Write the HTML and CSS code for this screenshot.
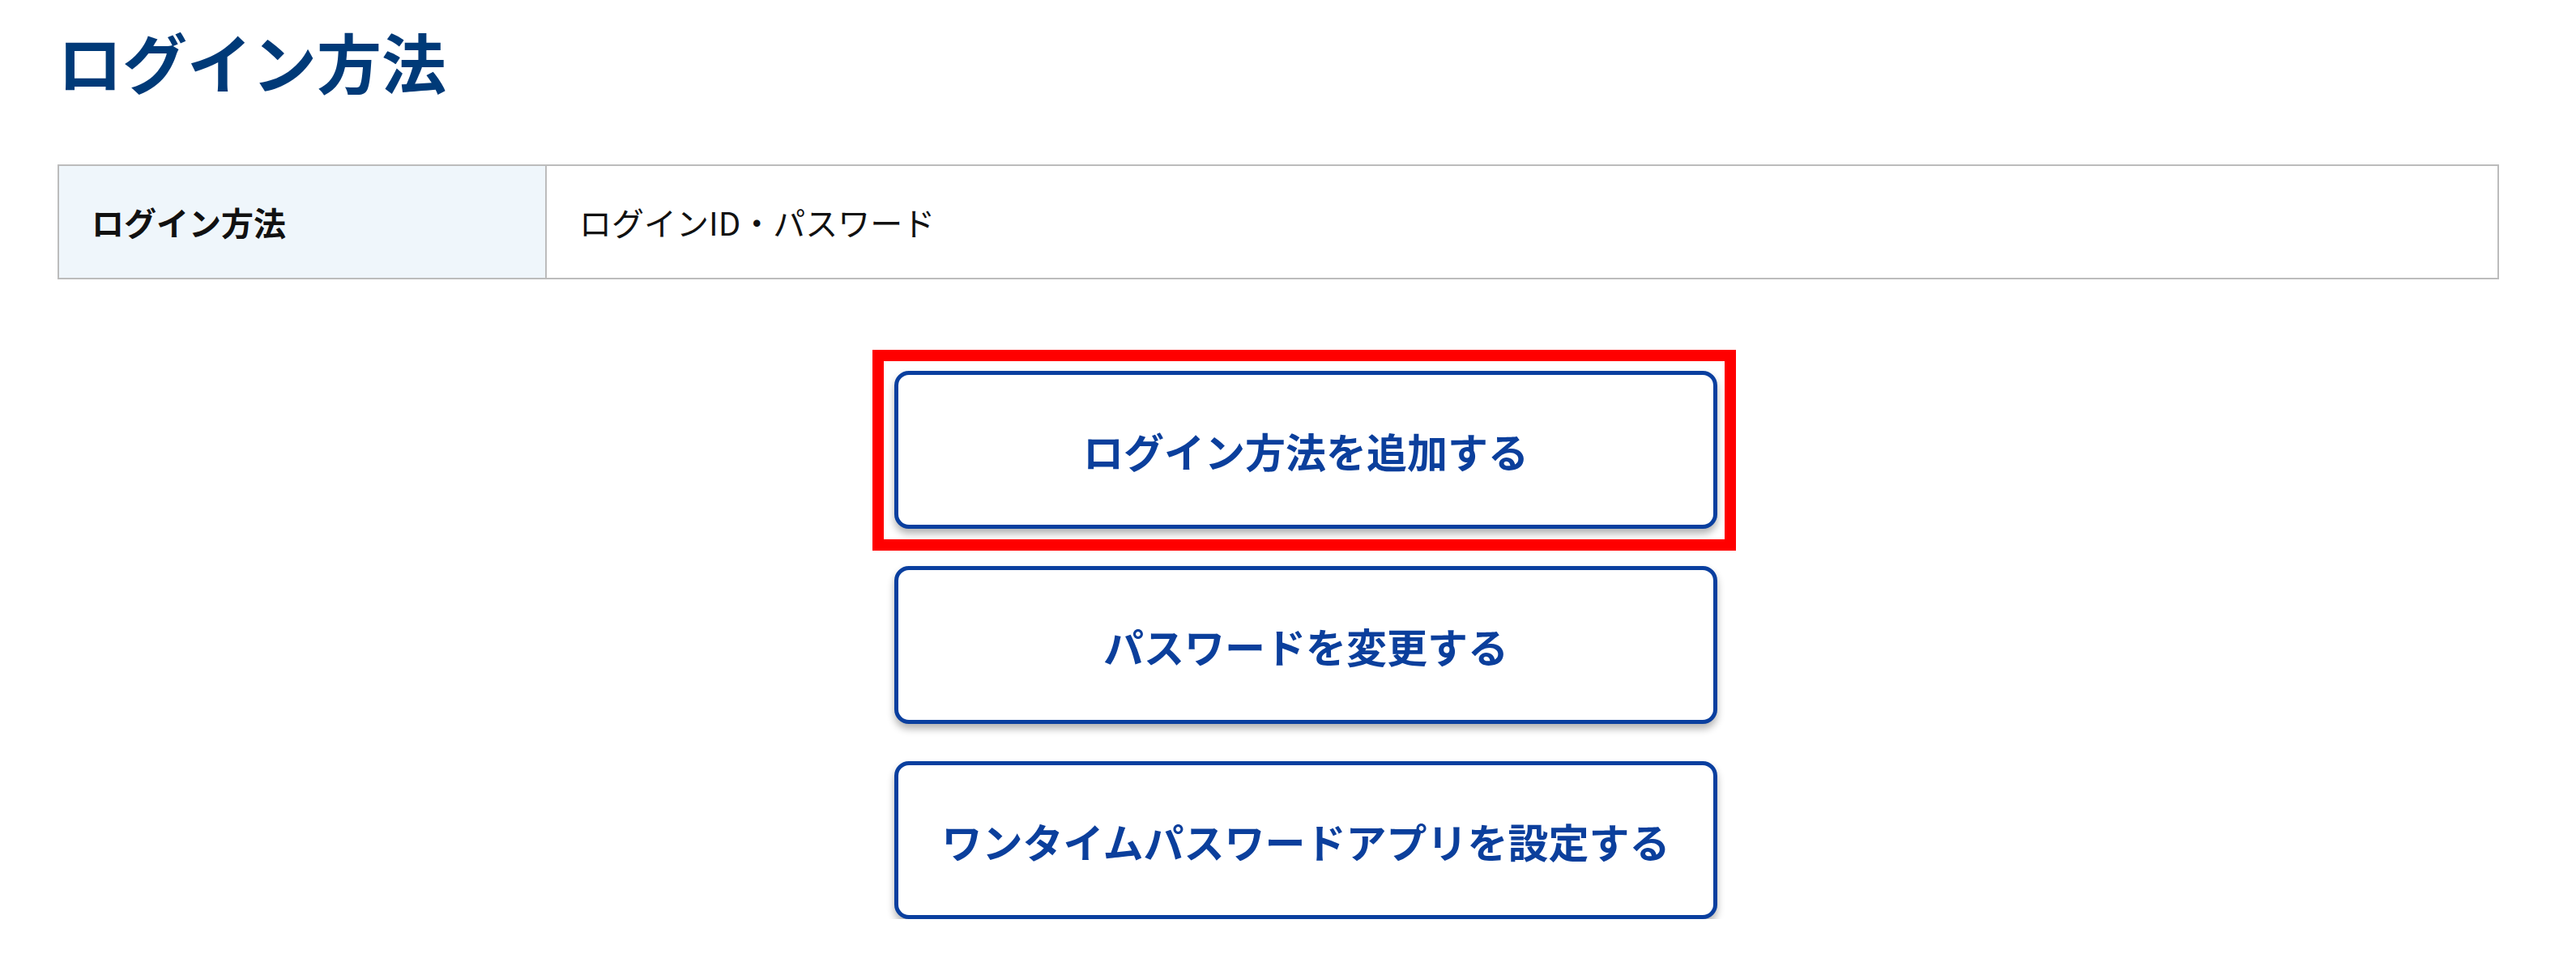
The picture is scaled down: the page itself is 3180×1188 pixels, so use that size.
FILE: index.html
```html
<!DOCTYPE html>
<html>
<head>
    <title>ログイン方法</title>
    <link rel="stylesheet" href="styles.css">
</head>
<body>
    <div class="container">
        <h1 class="page-title">ログイン方法</h1>

        <table class="info-table">
            <tr>
                <th>ログイン方法</th>
                <td>ログインID・パスワード</td>
            </tr>
        </table>

        <div class="actions">
            <div class="highlight">
                <button class="action-btn">ログイン方法を追加する</button>
            </div>
            <button class="action-btn">パスワードを変更する</button>
            <button class="action-btn">ワンタイムパスワードアプリを設定する</button>
        </div>
    </div>
</body>
</html>
```

FILE: styles.css
```css
body {
    margin: 0;
    background: #fff;
    font-family: "Noto Sans CJK JP", "Noto Sans", sans-serif;
}

.container {
    padding: 14px 95px 0 71px;
}

.page-title {
    margin: 0 0 69px;
    font-size: 80px;
    line-height: 120px;
    font-weight: 700;
    color: #003a78;
}

.info-table {
    width: 100%;
    border-collapse: collapse;
    border: 2px solid #bcbcbc;
}

.info-table th,
.info-table td {
    height: 138px;
    padding: 0 40px;
    font-size: 40px;
    color: #111;
    text-align: left;
    border: 2px solid #bcbcbc;
}

.info-table th {
    width: 520px;
    background: #eff6fb;
    font-weight: 700;
}

.info-table td {
    font-weight: 400;
}

.actions {
    display: flex;
    flex-direction: column;
    gap: 46px;
    width: 1016px;
    margin: 113px 0 0 1033px;
}

.highlight {
    position: relative;
}

.highlight::after {
    content: '';
    position: absolute;
    top: -26px;
    left: -27px;
    right: -23px;
    bottom: -27px;
    border: 14px solid #ff0000;
    pointer-events: none;
}

.action-btn {
    display: block;
    width: 1016px;
    height: 195px;
    padding: 0;
    background: #fff;
    border: 5px solid #0a3f9f;
    border-radius: 18px;
    box-shadow: 0 6px 10px rgba(0, 0, 0, 0.3);
    font-family: inherit;
    font-size: 50px;
    font-weight: 700;
    color: #0b3f9c;
    cursor: pointer;
}
```
